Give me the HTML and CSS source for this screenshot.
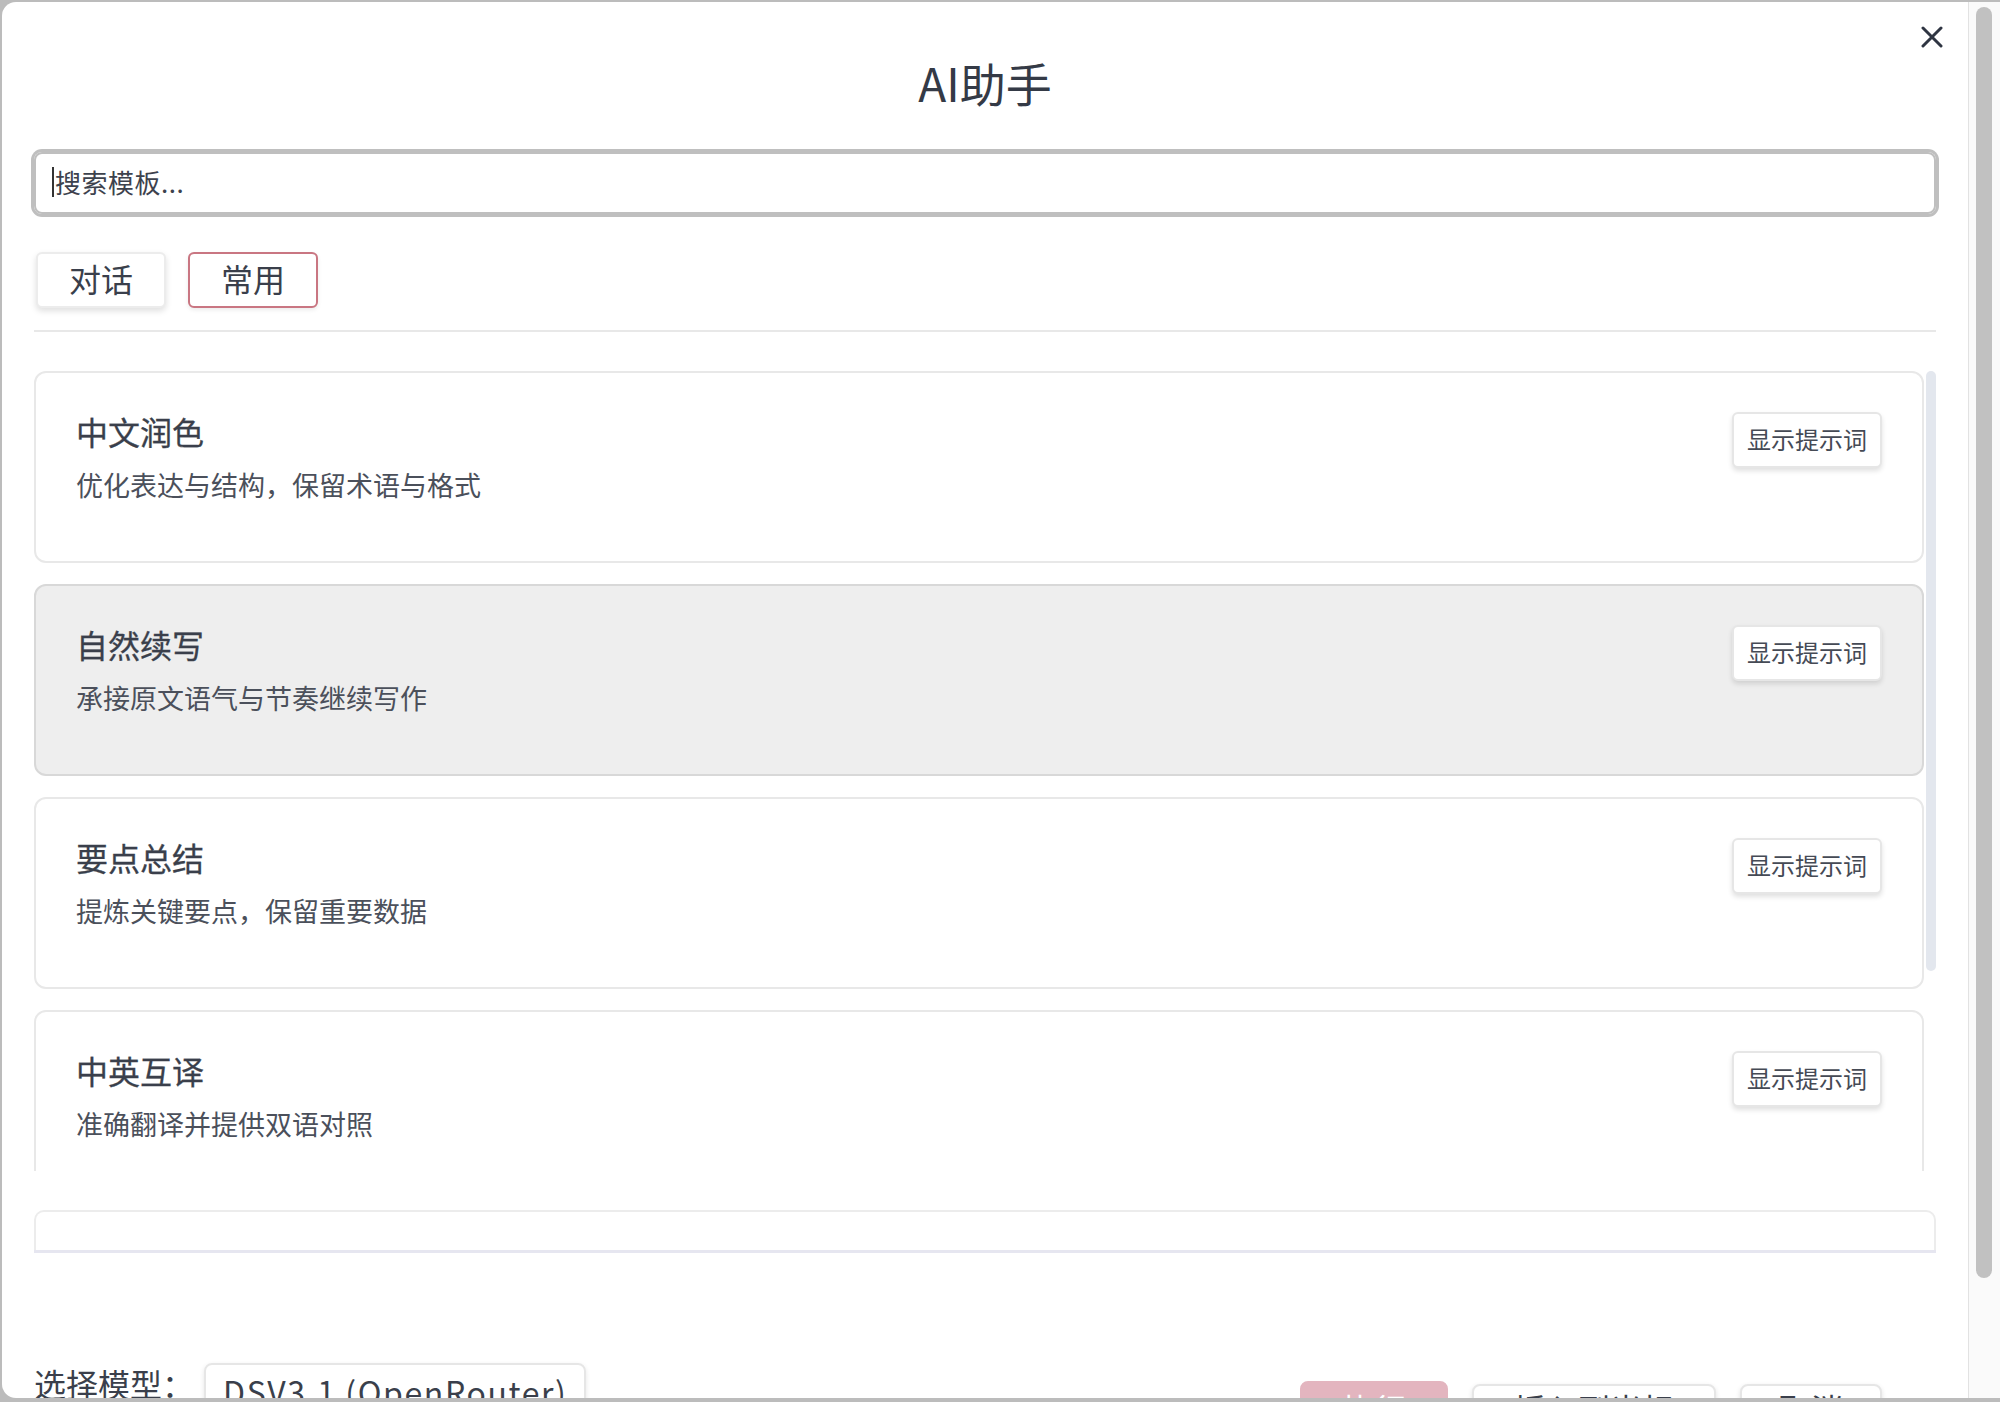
FILE: index.html
```html
<!DOCTYPE html>
<html lang="zh-CN">
<head>
<meta charset="utf-8">
<title>AI助手</title>
<link rel="stylesheet" href="styles.css">
</head>
<body>
<div class="frame">
  <div class="dialog">
    <button class="close" aria-label="关闭">
      <svg width="22" height="22" viewBox="0 0 22 22"><path d="M2 2 L20 20 M20 2 L2 20" stroke="#2f3542" stroke-width="3" stroke-linecap="round" fill="none"/></svg>
    </button>
    <h1 class="title">AI助手</h1>
    <div class="search"><span class="caret"></span><span class="placeholder">搜索模板...</span></div>
    <div class="tabs">
      <button class="tab">对话</button>
      <button class="tab active">常用</button>
    </div>
    <div class="divider"></div>
    <div class="list-wrap">
      <div class="list">
        <div class="card">
          <div class="card-text">
            <div class="card-title">中文润色</div>
            <div class="card-desc">优化表达与结构，保留术语与格式</div>
          </div>
          <button class="show-btn">显示提示词</button>
        </div>
        <div class="card hovered">
          <div class="card-text">
            <div class="card-title">自然续写</div>
            <div class="card-desc">承接原文语气与节奏继续写作</div>
          </div>
          <button class="show-btn">显示提示词</button>
        </div>
        <div class="card">
          <div class="card-text">
            <div class="card-title">要点总结</div>
            <div class="card-desc">提炼关键要点，保留重要数据</div>
          </div>
          <button class="show-btn">显示提示词</button>
        </div>
        <div class="card">
          <div class="card-text">
            <div class="card-title">中英互译</div>
            <div class="card-desc">准确翻译并提供双语对照</div>
          </div>
          <button class="show-btn">显示提示词</button>
        </div>
        <div class="card">
          <div class="card-text">
            <div class="card-title">语法纠错</div>
            <div class="card-desc">修正语法与标点错误</div>
          </div>
          <button class="show-btn">显示提示词</button>
        </div>
      </div>
      <div class="list-scroll"><div class="list-thumb"></div></div>
    </div>
    <div class="preview-wrap"><div class="preview"></div></div>
    <div class="footer">
      <div class="model">
        <span class="model-label">选择模型：</span>
        <div class="select">DSV3.1 (OpenRouter)</div>
      </div>
      <div class="actions">
        <button class="btn primary">执行</button>
        <button class="btn secondary">插入到光标</button>
        <button class="btn secondary cancel">取消</button>
      </div>
    </div>
  </div>
  <div class="vscroll"><div class="thumb"></div></div>
</div>
</body>
</html>
```
FILE: styles.css
```css
html, body {
  margin: 0;
  padding: 0;
}
body {
  width: 2000px;
  height: 1402px;
  overflow: hidden;
  background: #bcbcbc;
  font-family: "Noto Sans CJK SC", "Noto Sans", sans-serif;
  color: #3a3f4b;
}
button {
  font-family: inherit;
  cursor: pointer;
}
.frame {
  display: flex;
  margin: 2px 0 0 2px;
  height: 1396px;
  background: #ffffff;
  border-radius: 14px 0 0 14px;
  overflow: hidden;
}
.dialog {
  flex: 1;
  min-width: 0;
  position: relative;
  padding: 52px 32px 0 32px;
}
.close {
  position: absolute;
  top: 24px;
  right: 25px;
  width: 22px;
  height: 22px;
  padding: 0;
  border: 0;
  background: none;
  display: block;
}
.close svg {
  display: block;
}
.title {
  margin: 0;
  text-align: center;
  font-size: 46px;
  line-height: 56px;
  font-weight: 400;
  color: #343a46;
}
.search {
  margin-top: 42px;
  height: 62px;
  box-sizing: border-box;
  border: 2px solid #bfbfbf;
  box-shadow: 0 0 0 3px #bfbfbf;
  border-radius: 8px;
  display: flex;
  align-items: center;
  padding-left: 16px;
  padding-bottom: 3px;
  font-size: 26px;
  letter-spacing: 0.5px;
  color: #3d424d;
}
.caret {
  width: 2px;
  height: 30px;
  background: #333;
  margin-right: 1px;
}
.tabs {
  display: flex;
  gap: 22px;
  margin-top: 38px;
  padding-left: 2px;
}
.tab {
  height: 56px;
  box-sizing: border-box;
  padding: 0 31px 3px;
  font-size: 32px;
  line-height: 49px;
  border: 2px solid #ececec;
  background: #fff;
  border-radius: 6px;
  box-shadow: 0 3px 6px rgba(0, 0, 0, 0.13);
  color: #3a3f4b;
}
.tab.active {
  border-color: #c97682;
  box-shadow: 0 2px 4px rgba(0, 0, 0, 0.08);
}
.divider {
  height: 2px;
  background: #e8e8e8;
  margin-top: 22px;
}
.list-wrap {
  margin-top: 39px;
  height: 800px;
  display: flex;
}
.list {
  flex: 1;
  min-width: 0;
  overflow-y: auto;
  scrollbar-width: none;
  display: flex;
  flex-direction: column;
  gap: 21px;
}
.list-scroll {
  flex: none;
  width: 12px;
  padding-left: 2px;
  box-sizing: border-box;
}
.list-thumb {
  width: 10px;
  height: 600px;
  border-radius: 5px;
  background: #e3e7ee;
}
.card {
  flex: none;
  height: 192px;
  box-sizing: border-box;
  border: 2px solid #e8e8e8;
  border-radius: 12px;
  padding: 38px 40px 0 40px;
  display: flex;
  justify-content: space-between;
  align-items: flex-start;
  background: #fff;
}
.card.hovered {
  background: #eeeeee;
  border-color: #d8d8d8;
}
.card-title {
  font-size: 32px;
  line-height: 40px;
  font-weight: 400;
  -webkit-text-stroke: 0.3px #3a3f4b;
  color: #3a3f4b;
}
.card-desc {
  margin-top: 16px;
  font-size: 27px;
  line-height: 36px;
  color: #4b505b;
}
.show-btn {
  height: 56px;
  margin-top: 1px;
  padding: 0 13px 3px;
  font-size: 24px;
  border: 2px solid #e6e6e6;
  border-radius: 6px;
  background: #fff;
  box-shadow: 0 3px 5px rgba(0, 0, 0, 0.12);
  color: #454a55;
}
.preview-wrap {
  margin-top: 39px;
  border-bottom: 3px solid #e6e6f0;
}
.preview {
  height: 40px;
  box-sizing: border-box;
  border: 2px solid #ececec;
  border-bottom: 0;
  border-radius: 10px 10px 0 0;
}
.footer {
  display: flex;
  justify-content: space-between;
  align-items: flex-start;
  margin-top: 110px;
}
.model {
  display: flex;
  align-items: flex-start;
}
.model-label {
  font-size: 32px;
  line-height: 40px;
  color: #3a3f4b;
}
.select {
  margin-left: 10px;
  width: 382px;
  box-sizing: border-box;
  border: 2px solid #e6e6e6;
  border-radius: 8px;
  padding: 4px 17px;
  font-size: 32px;
  line-height: 44px;
  letter-spacing: 1.6px;
  white-space: nowrap;
  color: #3a3f4b;
  box-shadow: 0 2px 5px rgba(0, 0, 0, 0.1);
}
.actions {
  display: flex;
  align-items: flex-start;
  gap: 24px;
  margin-top: 18px;
  margin-right: 54px;
}
.btn {
  padding: 2px 40px;
  font-size: 32px;
  line-height: 40px;
  border-radius: 8px;
  border: 2px solid #e6e6e6;
  background: #fff;
  box-shadow: 0 2px 5px rgba(0, 0, 0, 0.12);
  color: #3a3f4b;
}
.btn.primary {
  background: #e3b5bf;
  border-color: #e3b5bf;
  color: #ffffff;
  box-shadow: none;
  padding-top: 5px;
}
.btn.secondary {
  margin-top: 3px;
}
.btn.cancel {
  padding-left: 37px;
  padding-right: 37px;
}
.vscroll {
  flex: none;
  width: 32px;
  box-sizing: border-box;
  border-left: 1px solid #e2e2e2;
  background: #fafafa;
  padding: 5px 0 0 7px;
}
.thumb {
  width: 16px;
  height: 1271px;
  border-radius: 8px;
  background: #c1c1c1;
}
```
